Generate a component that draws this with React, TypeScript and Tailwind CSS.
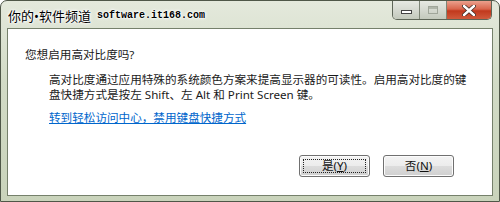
import React from "react";

const font = { fontFamily: '"Noto Sans", "Noto Sans CJK SC", sans-serif' };

function DlgButton({ label, mnemonic, focused }: { label: string; mnemonic: string; focused?: boolean }) {
  return (
    <div className="relative w-[71px] h-[22px] rounded-[3px] border border-[#707070] bg-[linear-gradient(to_bottom,#f3f3f3_0%,#ececec_48%,#dcdcdc_52%,#d0d0d0_100%)] shadow-[inset_0_0_0_1px_#fcfcfc] flex items-center justify-center">
      {focused && (
        <div className="absolute inset-[3px] border border-dotted border-[#222]" />
      )}
      <span className="text-[11.6px] leading-none text-[#111]">
        {label}(<span className="underline">{mnemonic}</span>)
      </span>
    </div>
  );
}

export default function App() {
  return (
    <div
      className="relative w-[500px] h-[202px] overflow-hidden rounded-t-[7px] border border-[#4f5748] bg-[linear-gradient(to_bottom,#e4e9dc_0%,#d2dbc6_40%,#c9d3bb_100%)]"
      style={font}
    >
      {/* title bar */}
      <div className="h-[27px] flex items-start justify-between">
        <div className="pl-[7px] pt-[7px] flex items-center gap-[6px] text-black [text-shadow:0_0_1px_#fff,0_0_2px_#fff,0_0_3px_#fff,0_0_4px_#fff]">
          <span className="text-[13px] leading-[16px]">你的•软件频道</span>
          <span className="text-[10px] leading-[16px] font-bold" style={{ fontFamily: '"Liberation Mono", monospace' }}>
            software.it168.com
          </span>
        </div>
        <div className="mr-[7px] flex h-[19px] rounded-b-[5px] border border-t-0 border-[#5e6658] overflow-hidden">
          <div className="w-[27px] flex items-center justify-center border-r border-[#7d8576] bg-[linear-gradient(to_bottom,#e6e9e2_0%,#d5d9d0_50%,#c3c9bc_100%)]">
            <div className="w-[11px] h-[4px] mt-[4px] bg-white border border-[#444]" />
          </div>
          <div className="w-[27px] flex items-center justify-center border-r border-[#7d8576] bg-[linear-gradient(to_bottom,#e6e9e2_0%,#d5d9d0_50%,#c3c9bc_100%)]">
            <div className="w-[10px] h-[8px] border border-[#a0a69a] shadow-[inset_0_2px_0_#b0b6aa]" />
          </div>
          <div className="w-[44px] flex items-center justify-center bg-[linear-gradient(to_bottom,#eba08d_0%,#d8654c_45%,#c1391d_55%,#d05a3c_100%)]">
            <svg width="14" height="11" viewBox="0 0 14 11">
              <path d="M2 1 L12 10 M12 1 L2 10" stroke="#3a2a22" strokeWidth="4" strokeLinecap="round" />
              <path d="M2 1 L12 10 M12 1 L2 10" stroke="#fff" strokeWidth="2.4" strokeLinecap="round" />
            </svg>
          </div>
        </div>
      </div>

      {/* client area */}
      <div className="mx-[6px] h-[168px] bg-white border border-[#75806b] pl-[17px] pt-[18px] pr-[38px] flex flex-col text-[11.6px] text-[#1a1a1a] whitespace-nowrap">
        <div className="leading-[15px]">您想启用高对比度吗?</div>
        <div className="mt-[10px] ml-[24px] leading-[15px]">
          <div>高对比度通过应用特殊的系统颜色方案来提高显示器的可读性。启用高对比度的键</div>
          <div>盘快捷方式是按左 Shift、左 Alt 和 Print Screen 键。</div>
        </div>
        <div className="mt-[8px] ml-[24px] leading-[15px] text-[#0066cc] underline">
          转到轻松访问中心，禁用键盘快捷方式
        </div>
        <div className="mt-[30px] flex justify-end gap-[13px]">
          <DlgButton label="是" mnemonic="Y" focused />
          <DlgButton label="否" mnemonic="N" />
        </div>
      </div>
    </div>
  );
}
